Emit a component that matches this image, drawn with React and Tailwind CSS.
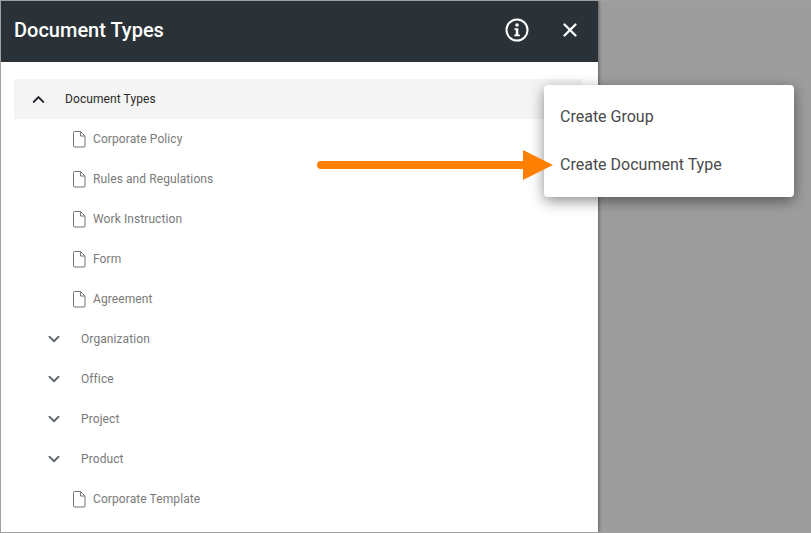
import React from 'react';
import { ChevronDown, ChevronUp, X } from 'lucide-react';

const roboto = "font-['Roboto',sans-serif]";

function FileIcon() {
    return (
        <svg width="14" height="17" viewBox="0 0 14 17" fill="none" stroke="#75717d" strokeWidth="1" className="shrink-0">
            <path d="M1.500 1.500a1 1 0 0 1 1-1h6l4.500 4.500v10a1 1 0 0 1-1 1h-9.500a1 1 0 0 1-1-1z" />
            <path d="M8.500 .5v4.500h4.500" />
        </svg>
    );
}

function InfoIcon() {
    return (
        <svg width="24" height="24" viewBox="0 0 24 24" fill="none">
            <circle cx="12" cy="12" r="10.500" stroke="#fff" strokeWidth="2" />
            <circle cx="12" cy="7" r="1.800" fill="#fff" />
            <path d="M9.500 10.300h3.800v6.200h1.500v1.700h-5.500v-1.700h1.500v-4.500h-1.300z" fill="#fff" />
        </svg>
    );
}

function FileRow({ label }) {
    return (
        <div className="flex h-10 items-center pl-[58px]">
            <FileIcon />
            <span className="ml-[7px] text-[12px] tracking-[0.09px] text-[#7a7a7a]">{label}</span>
        </div>
    );
}

function GroupRow({ label }) {
    return (
        <div className="flex h-10 items-center pl-[31px]">
            <ChevronDown size={18} strokeWidth={2.500} className="text-[#5f6a75]" />
            <span className="ml-[18px] text-[12px] tracking-[0.09px] text-[#7a7a7a]">{label}</span>
        </div>
    );
}

export default function App() {
    return (
        <div className={`relative flex h-[533px] w-[811px] overflow-hidden border-y border-l border-[#a0a0a0] bg-[#9d9d9d] ${roboto}`}>
            <div className="flex h-full w-[597px] flex-col bg-white shadow-[1px_0_3px_rgba(0,0,0,0.4)]">
                <div className="flex h-[61px] shrink-0 items-center justify-between bg-[#2a3238] pb-[3px] pl-[13px] pr-[17px]">
                    <h1 className="text-[20px] font-medium text-white">Document Types</h1>
                    <div className="flex items-center gap-[30px]">
                        <InfoIcon />
                        <X size={22} strokeWidth={2.500} className="text-white" />
                    </div>
                </div>
                <div className="pl-[13px] pr-[16px] pt-[17px]">
                    <div className="flex h-10 items-center bg-[#f4f4f4] pl-[15px]">
                        <ChevronUp size={19} strokeWidth={2.500} className="text-[#1c2228]" />
                        <span className="ml-[17px] text-[12px] tracking-[0.09px] text-[#2a2a2a]">Document Types</span>
                    </div>
                </div>
                <div className="px-[13px]">
                    <FileRow label="Corporate Policy" />
                    <FileRow label="Rules and Regulations" />
                    <FileRow label="Work Instruction" />
                    <FileRow label="Form" />
                    <FileRow label="Agreement" />
                    <GroupRow label="Organization" />
                    <GroupRow label="Office" />
                    <GroupRow label="Project" />
                    <GroupRow label="Product" />
                    <FileRow label="Corporate Template" />
                </div>
            </div>

            {/* context menu */}
            <div className="absolute left-[543px] top-[84px] flex h-[112px] w-[250px] flex-col justify-center rounded-[4px] bg-white shadow-[0_4px_14px_rgba(0,0,0,0.45)]">
                <div className="flex h-12 items-center pl-[16px] text-[16px] text-[#4a4a4a]">Create Group</div>
                <div className="flex h-12 items-center pl-[16px] text-[16px] text-[#4a4a4a]">Create Document Type</div>
            </div>

            {/* callout arrow */}
            <svg width="240" height="30" viewBox="0 0 240 30" className="absolute left-[314px] top-[149px]">
                <path d="M6 11h202V0l30 15-30 15V19H6a4 4 0 0 1 0-8z" fill="#ff8000" />
            </svg>
        </div>
    );
}
